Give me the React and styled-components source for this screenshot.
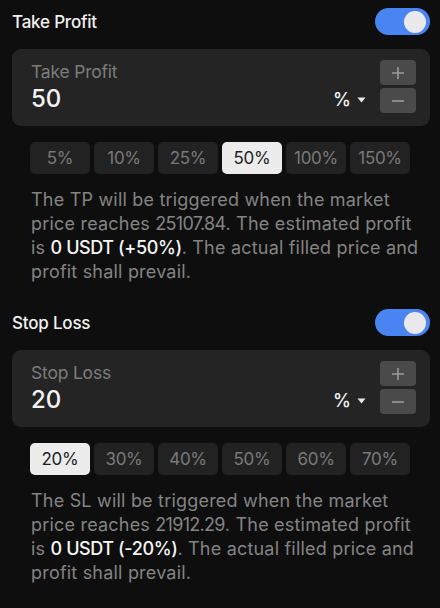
import React, { useState } from "react";
import styled, { createGlobalStyle } from "styled-components";

const Global = createGlobalStyle`
  html, body { margin: 0; padding: 0; background: #0e0e0e; }
  body { font-family: "Inter", "Noto Sans", sans-serif; -webkit-font-smoothing: antialiased; }
  * { box-sizing: border-box; }
`;

const Page = styled.div`
  width: 440px;
  height: 608px;
  background: #0e0e0e;
  padding: 8px 10px 0 12px;
  display: flex;
  flex-direction: column;
`;

const Section = styled.section`
  display: flex;
  flex-direction: column;
  & + & { margin-top: 25px; }
`;

const Header = styled.div`
  height: 27px;
  display: flex;
  align-items: center;
  justify-content: space-between;
`;

const Title = styled.div`
  color: #f0f0f0;
  font-size: 17px;
  font-weight: 500;
  letter-spacing: -0.2px;
`;

const Track = styled.button`
  width: 55px;
  height: 27px;
  border: none;
  border-radius: 14px;
  background: ${(p) => (p.$on ? "#4a84f2" : "#3a3a3a")};
  padding: 0 4px 0 0;
  display: flex;
  align-items: center;
  justify-content: ${(p) => (p.$on ? "flex-end" : "flex-start")};
  cursor: pointer;
`;

const Knob = styled.span`
  width: 22px;
  height: 22px;
  border-radius: 50%;
  background: #e9e9ec;
`;

const Card = styled.div`
  margin-top: 14px;
  height: 77px;
  background: #242424;
  border-radius: 9px;
  padding: 11px 14px 13px 19px;
  display: flex;
  align-items: stretch;
  justify-content: space-between;
`;

const Field = styled.div`
  display: flex;
  flex-direction: column;
  justify-content: space-between;
  padding-top: 1px;
`;

const Label = styled.div`
  color: #7c7c7c;
  font-size: 17.5px;
  line-height: 22px;
  letter-spacing: -0.2px;
`;

const Value = styled.div`
  color: #f4f4f4;
  font-size: 24px;
  font-weight: 500;
  line-height: 28px;
`;

const Right = styled.div`
  display: flex;
  align-items: flex-end;
  gap: 14px;
`;

const Unit = styled.div`
  display: flex;
  align-items: center;
  gap: 6px;
  color: #f4f4f4;
  font-size: 18px;
  font-weight: 500;
  margin-bottom: 3px;
`;

const Stepper = styled.div`
  display: flex;
  flex-direction: column;
  gap: 3px;
`;

const StepBtn = styled.button`
  width: 36px;
  height: 25px;
  border: none;
  border-radius: 4px;
  background: #4a4a4a;
  display: flex;
  align-items: center;
  justify-content: center;
  padding: 0;
  cursor: pointer;
`;

const Chips = styled.div`
  margin-top: 16px;
  padding-left: 18px;
  display: flex;
  gap: 4px;
`;

const Chip = styled.button`
  width: 60px;
  height: 32px;
  border: none;
  border-radius: 5px;
  background: ${(p) => (p.$active ? "#ececec" : "#222222")};
  color: ${(p) => (p.$active ? "#1e1e1e" : "#7a7a7a")};
  font-family: inherit;
  font-size: 17px;
  letter-spacing: -0.3px;
  padding: 0;
  cursor: pointer;
`;

const Note = styled.p`
  margin: 14px 0 0 0;
  padding: 0 0 0 19px;
  color: #848484;
  font-size: 18px;
  line-height: 24px;
  letter-spacing: 0.2px;
  white-space: nowrap;
  strong { color: #f6f6f6; font-weight: 500; letter-spacing: -0.4px; }
`;

const Num = styled.span`
  letter-spacing: -0.7px;
`;

const Plus = () => (
  <svg width="14" height="14" viewBox="0 0 14 14">
    <path d="M7 1v12M1 7h12" stroke="#9a9a9a" strokeWidth="1.6" />
  </svg>
);
const Minus = () => (
  <svg width="14" height="14" viewBox="0 0 14 14">
    <path d="M1 7h12" stroke="#9a9a9a" strokeWidth="1.6" />
  </svg>
);
const Caret = () => (
  <svg width="9" height="6" viewBox="0 0 9 6">
    <path d="M0.5 0.5h8L4.5 5.5z" fill="#e8e8e8" />
  </svg>
);

function Block({ title, value, options, active, kind, price, pct }) {
  const [on, setOn] = useState(true);
  return (
    <Section>
      <Header>
        <Title>{title}</Title>
        <Track $on={on} onClick={() => setOn(!on)} aria-label="toggle">
          <Knob />
        </Track>
      </Header>
      <Card>
        <Field>
          <Label>{title}</Label>
          <Value>{value}</Value>
        </Field>
        <Right>
          <Unit>
            %<Caret />
          </Unit>
          <Stepper>
            <StepBtn aria-label="increase"><Plus /></StepBtn>
            <StepBtn aria-label="decrease"><Minus /></StepBtn>
          </Stepper>
        </Right>
      </Card>
      <Chips>
        {options.map((o) => (
          <Chip key={o} $active={o === active}>{o}</Chip>
        ))}
      </Chips>
      <Note>
        The {kind} will be triggered when the market
        <br />
        price reaches <Num>{price}</Num>. The estimated profit
        <br />
        is <strong>0 USDT ({pct})</strong>. The actual filled price and
        <br />
        profit shall prevail.
      </Note>
    </Section>
  );
}

export default function App() {
  return (
    <>
      <Global />
      <Page>
        <Block
          title="Take Profit"
          value="50"
          options={["5%", "10%", "25%", "50%", "100%", "150%"]}
          active="50%"
          kind="TP"
          price="25107.84"
          pct="+50%"
        />
        <Block
          title="Stop Loss"
          value="20"
          options={["20%", "30%", "40%", "50%", "60%", "70%"]}
          active="20%"
          kind="SL"
          price="21912.29"
          pct="-20%"
        />
      </Page>
    </>
  );
}
